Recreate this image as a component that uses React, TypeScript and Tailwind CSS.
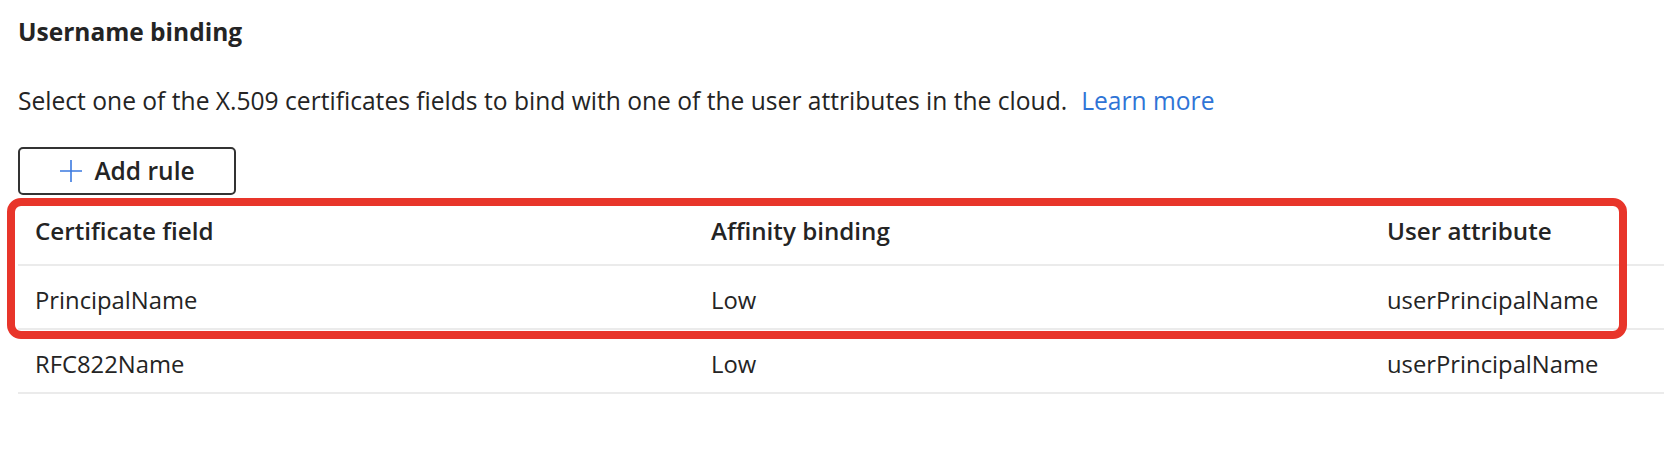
import React from 'react';

const rows = [
  { field: 'PrincipalName', affinity: 'Low', attr: 'userPrincipalName' },
  { field: 'RFC822Name', affinity: 'Low', attr: 'userPrincipalName' },
];

export default function App() {
  return (
    <div
      className="w-[1664px] h-[449px] bg-white text-[#242424] overflow-hidden pl-[18px] pt-[16px]"
      style={{ fontFamily: '"Open Sans", "Noto Sans", sans-serif' }}
    >
      <h2 className="text-[24.5px] leading-[32px] font-bold">Username binding</h2>

      <p className="mt-[37px] text-[24.6px] leading-[32px]">
        Select one of the X.509 certificates fields to bind with one of the user attributes in the cloud.
        <a className="ml-[14px] text-[#2f74d6] cursor-pointer">Learn more</a>
      </p>

      <button className="mt-[30px] w-[218px] h-[48px] flex items-center justify-center gap-[11px] border-2 border-[#333333] rounded-[5px] text-[24.5px] font-semibold">
        <svg width="24" height="24" viewBox="0 0 24 24" fill="none" stroke="#3b7ae0" strokeWidth="1.6">
          <path d="M12 1v22M1 12h22" />
        </svg>
        <span>Add rule</span>
      </button>

      <div className="relative mt-[3px]">
        <div className="grid grid-cols-[676px_676px_1fr] pl-[17px] h-[68px] items-center border-b-2 border-[#ebebeb] text-[24.2px] font-semibold">
          <div>Certificate field</div>
          <div>Affinity binding</div>
          <div>User attribute</div>
        </div>
        {rows.map((r) => (
          <div
            key={r.field}
            className="grid grid-cols-[676px_676px_1fr] pl-[17px] pt-[8px] h-[64px] items-center border-b-2 border-[#ebebeb] text-[23.8px]"
          >
            <div>{r.field}</div>
            <div>{r.affinity}</div>
            <div>{r.attr}</div>
          </div>
        ))}
        <div className="absolute left-[-11px] top-0 w-[1620px] h-[141px] border-[8px] border-[#e8352a] rounded-[14px] pointer-events-none" />
      </div>
    </div>
  );
}
